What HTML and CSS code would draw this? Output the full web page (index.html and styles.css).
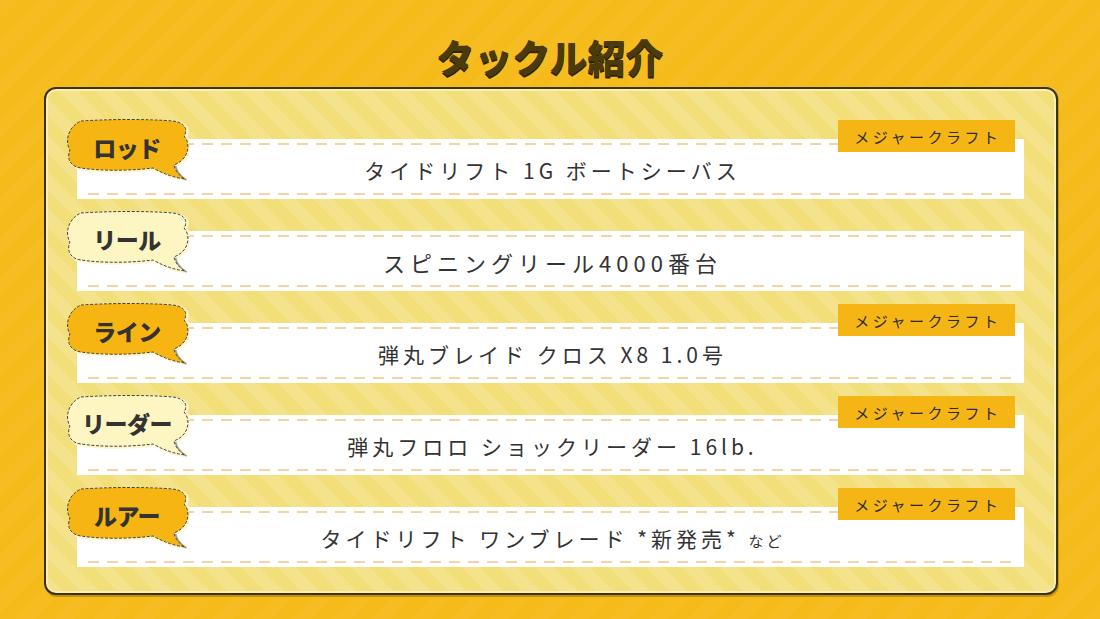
FILE: index.html
```html
<!DOCTYPE html>
<html lang="ja">
<head>
<meta charset="utf-8">
<title>タックル紹介</title>
<link rel="stylesheet" href="styles.css">
</head>
<body>
<svg class="defs" width="0" height="0" aria-hidden="true">
  <symbol id="bub" viewBox="0 0 124 62">
    <path fill="none" stroke="#fff6d0" stroke-width="3" transform="translate(1.5 1)" d="M16 2 C45 0 85 0 108 2 C118 3 124 9 119 17 C125 23 124 35 117 41 C114 44 111 45 109 46 Q111 55 120 60 Q104 58 88 49 C65 52 35 52 16 49 C6 48 1 40 5 31 C0 24 2 8 16 2 Z"/>
    <path fill="none" stroke="#9a9a9a" stroke-width="1.5" transform="translate(1.5 1)" d="M109 46 Q111 55 120 60"/>
    <path stroke="#444444" stroke-width="1" stroke-dasharray="3 1.6" d="M16 2 C45 0 85 0 108 2 C118 3 124 9 119 17 C125 23 124 35 117 41 C114 44 111 45 109 46 Q111 55 120 60 Q104 58 88 49 C65 52 35 52 16 49 C6 48 1 40 5 31 C0 24 2 8 16 2 Z"/>
  </symbol>
</svg>
<main class="stage">
  <h1 class="title">タックル紹介</h1>
  <section class="panel">
    <div class="row">
      <div class="bubble orange"><svg viewBox="0 0 124 62"><use href="#bub"/></svg><span>ロッド</span></div>
      <div class="maker">メジャークラフト</div>
      <p class="item">タイドリフト 1G ボートシーバス</p>
    </div>
    <div class="row">
      <div class="bubble cream"><svg viewBox="0 0 124 62"><use href="#bub"/></svg><span>リール</span></div>
      <p class="item wide">スピニングリール4000番台</p>
    </div>
    <div class="row">
      <div class="bubble orange"><svg viewBox="0 0 124 62"><use href="#bub"/></svg><span>ライン</span></div>
      <div class="maker">メジャークラフト</div>
      <p class="item">弾丸ブレイド クロス X8 1.0号</p>
    </div>
    <div class="row">
      <div class="bubble cream"><svg viewBox="0 0 124 62"><use href="#bub"/></svg><span>リーダー</span></div>
      <div class="maker">メジャークラフト</div>
      <p class="item">弾丸フロロ ショックリーダー 16lb.</p>
    </div>
    <div class="row">
      <div class="bubble orange"><svg viewBox="0 0 124 62"><use href="#bub"/></svg><span>ルアー</span></div>
      <div class="maker">メジャークラフト</div>
      <p class="item">タイドリフト ワンブレード *新発売* <span class="small">など</span></p>
    </div>
  </section>
</main>
</body>
</html>
```

FILE: styles.css
```css
html, body {
  margin: 0;
  padding: 0;
}
body {
  width: 1100px;
  height: 619px;
  overflow: hidden;
  background:
    repeating-linear-gradient(135deg, rgba(255,255,255,0.035) 0 14px, rgba(255,255,255,0) 14px 28px),
    #f5bb1a;
  font-family: "Noto Sans CJK JP", "Noto Sans", sans-serif;
  color: #333;
}
.defs {
  position: absolute;
  width: 0;
  height: 0;
}
.stage {
  display: flex;
  flex-direction: column;
  height: 619px;
}
.title {
  margin: 0;
  height: 87px;
  box-sizing: border-box;
  padding-top: 36px;
  font-size: 38px;
  line-height: 40px;
  font-weight: 900;
  text-align: center;
  color: #4b3a0a;
  text-shadow: 0 2px 0 #2e2306;
  letter-spacing: 0;
}
.panel {
  margin: 0 42px 0 44px;
  height: 508px;
  box-sizing: border-box;
  border: 2px solid #3b3314;
  border-radius: 12px;
  box-shadow: inset 0 0 0 2px #fbefb4, 1px 2px 0 #c99208;
  background:
    repeating-linear-gradient(45deg, rgba(255,255,255,0.12) 0 13px, rgba(255,255,255,0) 13px 26px),
    #f3df7a;
  padding: 50px 32px 26px 31px;
  display: flex;
  flex-direction: column;
  gap: 32px;
}
.row {
  position: relative;
  height: 60px;
  flex: none;
  background:
    repeating-linear-gradient(90deg, #f4d3a4 0 11px, rgba(255,255,255,0) 11px 19px) 11px 4px / calc(100% - 16px) 2px no-repeat,
    repeating-linear-gradient(90deg, #f4d3a4 0 11px, rgba(255,255,255,0) 11px 19px) 11px 54px / calc(100% - 16px) 2px no-repeat,
    #ffffff;
}
.item {
  margin: 0;
  height: 60px;
  padding-top: 2px;
  padding-left: 4px;
  box-sizing: border-box;
  line-height: 58px;
  text-align: center;
  font-size: 21px;
  letter-spacing: 4px;
  font-weight: 400;
  color: #333;
}
.item.wide {
  font-size: 22px;
  letter-spacing: 5px;
}
.small {
  font-size: 15px;
  letter-spacing: 3px;
}
.maker {
  position: absolute;
  right: 9px;
  top: -19px;
  width: 177px;
  height: 32px;
  background: #f5b514;
  display: flex;
  align-items: center;
  justify-content: center;
  padding-left: 3px;
  box-sizing: border-box;
  font-size: 15px;
  letter-spacing: 3.5px;
  color: #2b2b2b;
}
.bubble {
  position: absolute;
  left: -12px;
  top: -20px;
  width: 124px;
  height: 62px;
  z-index: 2;
}
.bubble svg {
  position: absolute;
  inset: 0;
  width: 124px;
  height: 62px;
  overflow: visible;
}
.bubble.orange svg {
  fill: #f7b513;
}
.bubble.cream svg {
  fill: #fdf6c2;
}
.bubble span {
  position: absolute;
  left: 0;
  top: 0;
  width: 124px;
  height: 52px;
  display: flex;
  align-items: center;
  justify-content: center;
  padding-top: 3px;
  box-sizing: border-box;
  font-size: 23px;
  font-weight: 900;
  color: #333;
  letter-spacing: -0.5px;
}
```
